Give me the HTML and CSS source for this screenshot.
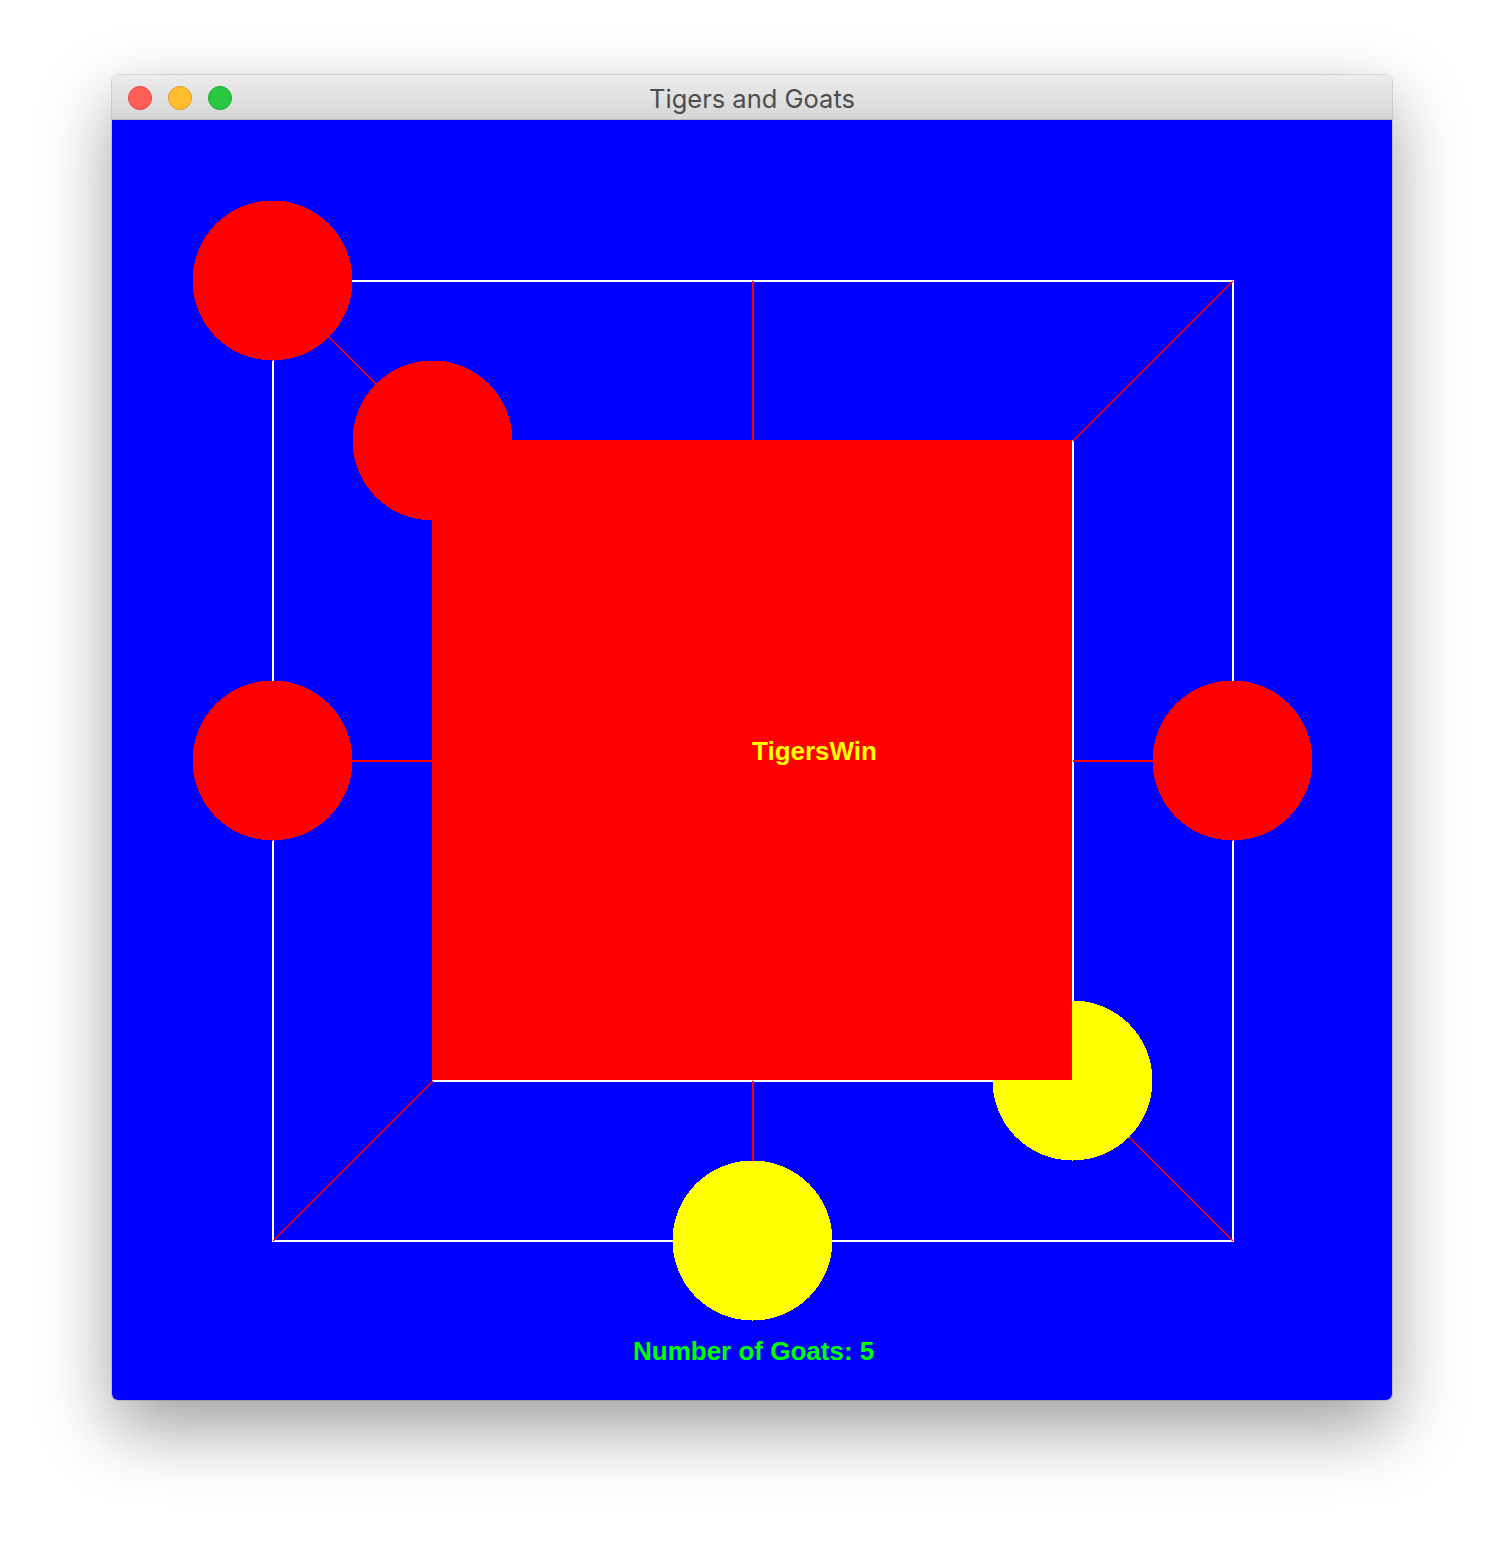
FILE: index.html
```html
<!DOCTYPE html>
<html>
<head>
<meta charset="utf-8">
<title>Tigers and Goats</title>
<link rel="stylesheet" href="styles.css">
</head>
<body>
<div class="window">
  <div class="titlebar">
    <div class="lights">
      <span class="light red"></span>
      <span class="light yellow"></span>
      <span class="light green"></span>
    </div>
    <div class="title">Tigers and Goats</div>
  </div>
  <svg class="board" width="1280" height="1280" viewBox="0 0 1280 1280">
    <rect class="bg" x="0" y="0" width="1280" height="1280"/>
    <rect class="wline" x="161" y="161" width="960" height="960"/>
    <rect class="wline" x="321" y="321" width="640" height="640"/>
    <line class="rline" x1="641" y1="161" x2="641" y2="321"/>
    <line class="rline" x1="641" y1="961" x2="641" y2="1121"/>
    <line class="rline" x1="161" y1="641" x2="321" y2="641"/>
    <line class="rline" x1="961" y1="641" x2="1121" y2="641"/>
    <line class="dline" x1="161" y1="161" x2="321" y2="321"/>
    <line class="dline" x1="1121" y1="161" x2="961" y2="321"/>
    <line class="dline" x1="161" y1="1121" x2="321" y2="961"/>
    <line class="dline" x1="1121" y1="1121" x2="961" y2="961"/>
    <circle class="tiger" cx="160.5" cy="160.5" r="80"/>
    <circle class="tiger" cx="320.5" cy="320.5" r="80"/>
    <circle class="tiger" cx="160.5" cy="640.5" r="80"/>
    <circle class="tiger" cx="1120.5" cy="640.5" r="80"/>
    <circle class="goat" cx="960.5" cy="960.5" r="80"/>
    <circle class="goat" cx="640.5" cy="1120.5" r="80"/>
    <rect class="banner" x="320" y="320" width="640" height="640"/>
    <text class="win" x="640" y="640">TigersWin</text>
    <text class="count" x="521" y="1240">Number of Goats: 5</text>
  </svg>
</div>
</body>
</html>
```
FILE: styles.css
```css
html, body {
  margin: 0;
  padding: 0;
  background: #ffffff;
}

body {
  padding: 75px 0 0 112px;
  height: 1548px;
  box-sizing: border-box;
}

.window {
  width: 1280px;
  border-radius: 6px;
  overflow: hidden;
  box-shadow: 0 28px 70px rgba(0, 0, 0, 0.38), 0 0 0 1px rgba(0, 0, 0, 0.12);
}

.titlebar {
  height: 44px;
  border-bottom: 1px solid #b9b9b9;
  background: linear-gradient(#ececec, #d6d6d6);
  display: flex;
  align-items: center;
  position: relative;
}

.lights {
  display: flex;
  gap: 16px;
  padding-left: 16px;
  padding-top: 2px;
}

.light {
  width: 24px;
  height: 24px;
  border-radius: 50%;
  box-sizing: border-box;
}

.light.red { background: #ff5f57; border: 1px solid #e2463f; }
.light.yellow { background: #febc2e; border: 1px solid #e1a116; }
.light.green { background: #28c840; border: 1px solid #14ae2a; }

.title {
  position: absolute;
  left: 0;
  right: 0;
  top: 0;
  bottom: 0;
  display: flex;
  align-items: center;
  justify-content: center;
  font-family: Inter, "Noto Sans", sans-serif;
  font-size: 25.5px;
  color: #4d4d4d;
  padding-top: 3px;
}

.board {
  display: block;
  shape-rendering: crispEdges;
}

.bg { fill: #0000ff; }
.wline { fill: none; stroke: #ffffff; stroke-width: 2; }
.rline { stroke: #ff0000; stroke-width: 2; }
.dline {
  stroke: #ff0000;
  stroke-width: 1.5;
  shape-rendering: auto;
}
.tiger { fill: #ff0000; }
.goat { fill: #ffff00; }
.banner { fill: #ff0000; }

.win, .count {
  font-family: "Liberation Sans", Arial, sans-serif;
  font-weight: bold;
  font-size: 26px;
}

.win { fill: #ffff00; }
.count { fill: #00ff00; }
```
